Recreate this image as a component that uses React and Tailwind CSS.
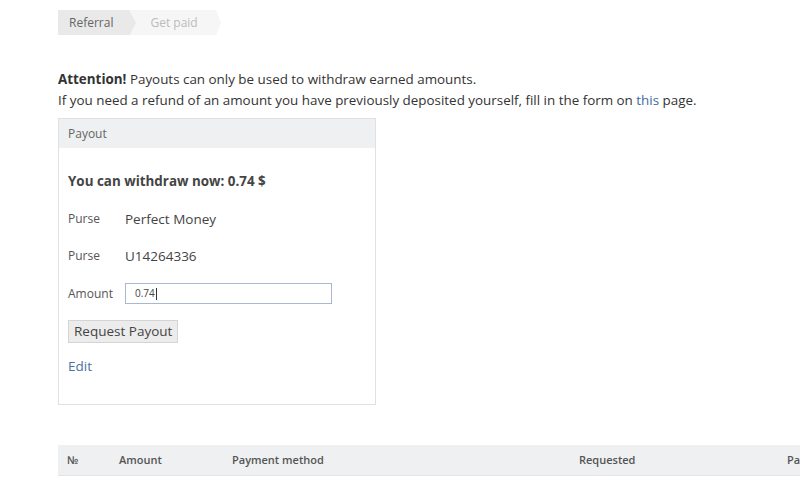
import React from "react";

export default function App() {
  return (
    <div className="w-[800px] h-[477px] overflow-hidden bg-white text-[#333]" style={{ fontFamily: '"Open Sans", "Liberation Sans", sans-serif' }}>
      <div className="pl-[58px] pt-[9px]">
        {/* breadcrumb steps */}
        <div className="flex h-[26px] text-[12px] pt-px">
          <div className="relative flex items-center bg-[#e9e9e9] pl-[11px] pr-[16px] text-[#666] z-10">
            Referral
            <div className="absolute right-[-7px] top-0 h-0 w-0 border-y-[13px] border-l-[7px] border-y-transparent border-l-[#e9e9e9]"></div>
          </div>
          <div className="relative flex items-center bg-[#f6f6f6] pl-[21px] pr-[18px] text-[#bbb]">
            Get paid
            <div className="absolute right-[-5px] top-0 h-0 w-0 border-y-[13px] border-l-[5px] border-y-transparent border-l-[#f6f6f6]"></div>
          </div>
        </div>

        <div className="mt-[34px] text-[13.4px] leading-[21px] text-[#333]">
          <p><b className="font-bold">Attention!</b> Payouts can only be used to withdraw earned amounts.</p>
          <p>If you need a refund of an amount you have previously deposited yourself, fill in the form on <a className="text-[#3d6a9e]">this</a> page.</p>
        </div>

        <div className="mt-[7px] w-[318px] h-[287px] border border-[#dfe2e4]">
          <div className="h-[29px] bg-[#eef0f1] flex items-center pl-[9px] text-[12px] text-[#666]">Payout</div>
          <div className="pl-[9px] pt-[23px]">
            <div className="text-[13.4px] font-bold text-[#444]">You can withdraw now: 0.74 $</div>
            <div className="mt-[18px] flex items-center h-[20px]">
              <span className="w-[57px] text-[12px] text-[#555]">Purse</span>
              <span className="text-[13.5px] text-[#444]">Perfect Money</span>
            </div>
            <div className="mt-[17px] flex items-center h-[20px]">
              <span className="w-[57px] text-[12px] text-[#555]">Purse</span>
              <span className="text-[13.5px] text-[#444]">U14264336</span>
            </div>
            <div className="mt-[17px] flex items-center">
              <span className="w-[57px] text-[12px] text-[#555]">Amount</span>
              <div className="w-[207px] h-[21px] border border-[#a8b8d0] flex items-center pl-[9px] text-[10px] text-[#444]">
                0.74<span className="inline-block w-px h-[12px] bg-[#333] ml-px"></span>
              </div>
            </div>
            <button className="mt-[16px] h-[23px] px-[5px] bg-[#ececec] border border-[#d4d4d4] text-[13.5px] text-[#444] leading-none">Request Payout</button>
            <div className="mt-[13px] text-[13.5px] text-[#4a73a0]">Edit</div>
          </div>
        </div>

        <div className="mt-[40px] w-[760px] h-[31px] bg-[#eef0f1] border-b border-[#e2e4e6] flex items-center text-[11px] font-semibold text-[#555] whitespace-nowrap">
          <span className="w-[61px] pl-[9px]">№</span>
          <span className="w-[113px]">Amount</span>
          <span className="w-[347px]">Payment method</span>
          <span className="w-[208px]">Requested</span>
          <span>Paid</span>
        </div>
      </div>
    </div>
  );
}
